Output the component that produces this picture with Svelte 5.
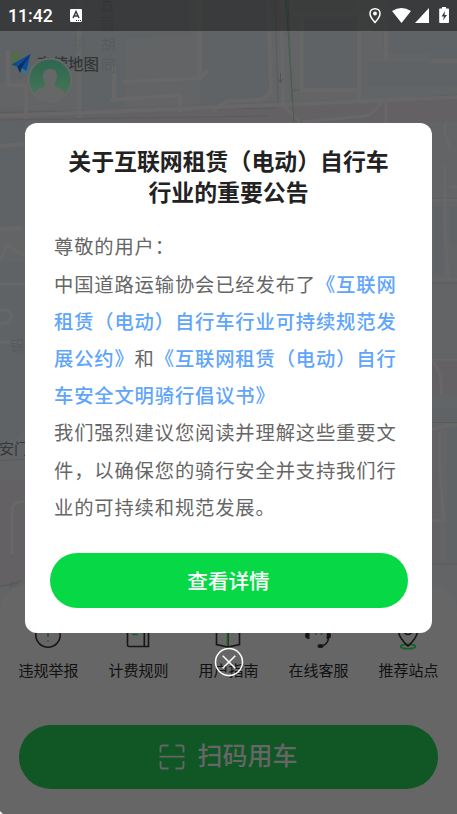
<script>
  const services = [
    { name: '违规举报', icon: 'report' },
    { name: '计费规则', icon: 'rules' },
    { name: '用户指南', icon: 'guide' },
    { name: '在线客服', icon: 'support' },
    { name: '推荐站点', icon: 'station' }
  ]

  let showNotice = $state(true)
</script>

<main class="screen">
  <svg class="map" viewBox="0 0 457 814" aria-hidden="true">
    <rect width="457" height="814" fill="#636465" />
    <g fill="#5f6365">
      <path d="M0 0H78V70L0 82zM82 0H190V35L125 38V112H82zM200 0H271V84Q271 98 255 98L200 104zM304 16H358V88H304zM368 62H457V86H368zM390 0H457V61H430V54H383V28H390z" />
      <path d="M0 108L25 106V230H0zM0 262H25V430L0 448zM433 207H443V275H433zM450 207H457V245H450zM432 408H457V421H432zM447 425H457V562H447z" />
    </g>
    <g fill="#646164">
      <path d="M0 112L280 101 457 98V122H0zM0 480H25V586H0zM432 425H440V562H432zM432 362H457V395H432z" />
    </g>
    <g fill="none" stroke="#5a5b5c" stroke-width="1">
      <path d="M0 112.500L276 108M276 106L457 95M0 120L270 116M293 90H358M275 0L278 103M288 0L292 103M432 198.500H457M432 283H457M432 357.500H457M432 422.500H457M432 564H457M0 461L25 459M0 586H25" />
    </g>
    <g fill="none" stroke="#676767" stroke-width="4">
      <path d="M0 116L275 105 457 97M79 28V118M8 50V85H26V119M110 100L180 95V112M114 100V66M123 82L200 78V0M200 78L208 71M212 111L228 101M268 0L271 88Q270 99 258 100L227 101M281 0L283 103M302 15V90H359V0M292 15H376Q386 15 386 28V60M431 61H457M359 30H371M359 90V100M0 146L25 144M0 229L23 228" />
      <path d="M0 260L7 244 14 250 25 256M0 284H25M0 310H8Q14 315 8 323L0 324M0 342H25M12 554V509Q13 502 25 501M445 165Q443 230 449 280M432 200H457M450 187H457M432 280H457M432 359H457M433 362Q443 373 441 395M432 430Q440 425 457 425M440 433Q438 460 444 520L432 521" stroke-width="3" />
      <path d="M383 100Q375 113 366 116L303 122M284 106L300 122M386 103V123M446 122Q442 132 448 140L449 150" stroke-width="3" />
    </g>
    <path d="M286 0L294 122" stroke="#42614a" fill="none" />
    <path d="M280.500 73V82M278 79L280.500 83 283 79" stroke="#535353" fill="none" />
    <path d="M0 586L19 583M9 584L21 581M13 580L10 589" stroke="#565a60" fill="none" />
    <g class="street">
      <text x="100" y="12">真</text>
      <text x="100" y="29">弱</text>
      <text x="101" y="50">胡</text>
      <text x="101" y="71">同</text>
      <text class="hidden-lane" x="71" y="50">胡</text>
      <text x="10" y="351">锡</text>
    </g>
    <text class="district" x="-1" y="453.500">安门</text>
    <path d="M0 810L4 814H0z" fill="#eee" />
  </svg>

  <header class="status">
    <span class="time">11:42</span>
    <svg class="keyboard" viewBox="0 0 12 13">
      <rect width="12" height="13" rx="1.200" fill="#fff" />
      <path d="M3 9L6 2.500 9 9M4.200 7H7.800" fill="none" stroke="#3b3b3b" stroke-width="1.500" />
      <path d="M6 11.500h1M8 11.500h1M10 11.500h1" stroke="#3b3b3b" />
    </svg>
    <svg class="signals" viewBox="0 0 82 18">
      <path d="M6 1.700C2.900 1.700 1 3.900 1 6.600C1 10.200 6 15.500 6 15.500S11 10.200 11 6.600C11 3.900 9.100 1.700 6 1.700z" fill="none" stroke="#fff" stroke-width="1.500" />
      <circle cx="6" cy="6.500" r="1.900" fill="#fff" />
      <path d="M23 4Q32.500-2 42 4L32.500 16z" fill="#fff" />
      <path d="M60 1V16H46z" fill="#fff" />
      <path d="M73 0h4v1.500h2.200a.8 .8 0 0 1 .8 .8V15.200a.8 .8 0 0 1-.8 .8H71a.8 .8 0 0 1-.8-.8V2.300a.8 .8 0 0 1 .8-.8h2z" fill="#fff" />
      <path d="M76 4L72.500 9.500H75L74 13.500 78 8H75.500z" fill="#3b3b3b" />
    </svg>
  </header>

  <div class="brand">
    <svg class="brand-mark" viewBox="0 0 22 24">
      <path d="M1 3Q4 0 9 1L11 9 1 17z" fill="#526e48" />
      <path d="M13 15L20 13 17 23Q13 24 11 21z" fill="#3e7186" />
      <path d="M20.500 3L1.500 13.500 7.500 16 10 22 11.500 17 16.500 20z" fill="#104c96" />
      <path d="M20.500 3L7.500 16 10 22 11.500 17z" fill="#082e63" />
    </svg>
    <span>高德地图</span>
    <svg class="avatar" viewBox="0 0 46 46">
      <defs>
        <linearGradient id="face" x2="0" y2="1">
          <stop stop-color="#2c6550" />
          <stop offset="1" stop-color="#4b7857" />
        </linearGradient>
        <clipPath id="disc"><circle cx="23" cy="23" r="20.500" /></clipPath>
      </defs>
      <circle cx="23" cy="23" r="22.500" fill="#676968" />
      <g clip-path="url(#disc)">
        <rect width="46" height="46" fill="url(#face)" />
        <path d="M23 12C18.500 12 15.800 15 16 19.500C16.200 23.500 18.200 25.500 18.200 27.500C18.200 31 9.500 31 7 37V46H39V37C36.500 31 27.800 31 27.800 27.500C27.800 25.500 29.800 23.500 30 19.500C30.200 15 27.500 12 23 12z" fill="#666867" />
      </g>
    </svg>
  </div>

  <section class="panel">
    <nav class="services">
      {#each services as service}
        <a href="#{service.icon}" class="service">
          <svg viewBox="0 0 30 30">
            {#if service.icon === 'report'}
              <circle cx="15" cy="15" r="12.200" />
              <path class="accent" d="M15 8V17M15 20V21.500" />
            {:else if service.icon === 'rules'}
              <path d="M4.500 3H25.500V26.500H6Q4.500 26.500 4.500 25zM21.300 3V26.500" />
              <path class="accent" d="M9 14.500H15" />
            {:else if service.icon === 'guide'}
              <path d="M3.500 3L15 6V27L3.500 24.500zM15 6L26.500 3V24.500L15 27" />
              <path class="accent" d="M14.500 7V26" />
            {:else if service.icon === 'support'}
              <path d="M4.500 15V12a10.500 10.500 0 0 1 21 0V18Q25 25 17 26.500" />
              <path class="filled" d="M6.500 11.500Q2 12 2 15.500T6.500 19zM24 11.500Q28 12 28 15.500T23.500 19z" />
              <ellipse class="filled" cx="17.500" cy="26" rx="3" ry="2" />
              <path class="accent" d="M13 10V15M18.500 10V15" />
            {:else}
              <ellipse class="accent" cx="15" cy="26.500" rx="7.500" ry="2.300" />
              <path d="M15 1.500a9.500 9.500 0 0 0-9.500 9.500C5.500 16 11 23 15 26C19 23 24.500 16 24.500 11A9.500 9.500 0 0 0 15 1.500z" />
              <circle cx="15" cy="10.500" r="4" />
            {/if}
          </svg>
          <span>{service.name}</span>
        </a>
      {/each}
    </nav>
    <button class="scan">
      <svg viewBox="0 0 26 26">
        <path d="M1.500 8.500V3.500Q1.500 1.500 3.500 1.500H9.500M16.500 1.500H22.500Q24.500 1.500 24.500 3.500V8.500M24.500 17V22.500Q24.500 24.500 22.500 24.500H16.500M9.500 24.500H3.500Q1.500 24.500 1.500 22.500V17M.5 12.700H25.500" />
      </svg>
      <span>扫码用车</span>
    </button>
  </section>

  {#if showNotice}
    <div class="overlay">
      <section class="dialog">
        <h2>关于互联网租赁（电动）自行车<br />行业的重要公告</h2>
        <div class="content">
          <p>尊敬的用户：</p>
          <p>中国道路运输协会已经发布了<a href="#pact">《互联网<br />租赁（电动）自行车行业可持续规范发<br />展公约》</a>和<a href="#proposal">《互联网租赁（电动）自行<br />车安全文明骑行倡议书》</a></p>
          <p>我们强烈建议您阅读并理解这些重要文<br />件，以确保您的骑行安全并支持我们行<br />业的可持续和规范发展。</p>
        </div>
        <button class="confirm">查看详情</button>
      </section>
      <button class="close" aria-label="关闭" onclick={() => (showNotice = false)}>
        <svg viewBox="0 0 30 30">
          <circle cx="15" cy="15" r="13.500" />
          <path d="M8.700 8.700L21.300 21.300M21.300 8.700L8.700 21.300" />
        </svg>
      </button>
    </div>
  {/if}
</main>

<style>
  :global(body) {
    margin: 0;
    background: #666;
  }

  .screen {
    position: relative;
    display: flex;
    flex-direction: column;
    width: 457px;
    height: 814px;
    overflow: hidden;
    font-family: "Noto Sans CJK SC", sans-serif;
  }

  .map {
    position: absolute;
    top: 0;
    left: 0;
    width: 457px;
    height: 814px;
  }

  .street {
    fill: #565859;
    font-size: 14.500px;
    font-weight: 300;
  }

  .hidden-lane {
    fill: #5d5f60;
  }

  .district {
    fill: #34373d;
    font-size: 15px;
  }

  .status {
    position: relative;
    display: flex;
    align-items: center;
    box-sizing: border-box;
    height: 31px;
    padding: 0 6px 0 8px;
    background: rgba(0, 0, 0, 0.4);
    color: #fff;
  }

  .time {
    width: 62px;
    font: 500 17.700px/31px Roboto, sans-serif;
    padding-top: 1px;
  }

  .keyboard {
    width: 12px;
    height: 13px;
  }

  .signals {
    width: 82px;
    height: 18px;
    margin-left: auto;
  }

  .brand {
    position: relative;
    display: flex;
    height: 26px;
    margin: 20px 0 0 10px;
    color: #353535;
    font-size: 15.500px;
    font-weight: 500;
    line-height: 24px;
  }

  .brand-mark {
    width: 22px;
    height: 24px;
    margin-right: 5px;
  }

  .avatar {
    position: absolute;
    top: 6px;
    left: 17px;
    width: 46px;
    height: 46px;
  }

  .panel {
    position: relative;
    box-sizing: border-box;
    height: 230px;
    margin-top: auto;
    padding: 36px 3px 0;
    border-radius: 28px 28px 0 0;
    background: #666;
    clip-path: polygon(0 0, 100% 0, 100% 100%, 3px 100%, 0 227px);
  }

  .services {
    display: grid;
    grid-template-columns: repeat(5, 90px);
  }

  .service {
    display: flex;
    flex-direction: column;
    align-items: center;
    color: #111;
    font-size: 15px;
    line-height: 22px;
    text-decoration: none;
  }

  .service svg {
    width: 30px;
    height: 30px;
    margin-bottom: 9px;
    fill: none;
    stroke: #171717;
    stroke-width: 1.600;
  }

  .service span {
    padding-left: 1px;
  }

  .service .accent {
    stroke: #175f2b;
  }

  .service .filled {
    fill: #171717;
    stroke: none;
  }

  button {
    display: flex;
    align-items: center;
    justify-content: center;
    padding: 0;
    border: 0;
    font-family: inherit;
    font-weight: 500;
  }

  .scan {
    gap: 12px;
    width: 419px;
    height: 64px;
    margin: 44px 16px 0;
    border-radius: 32px;
    background: #105725;
    color: #666;
    font-size: 25px;
  }

  .scan span {
    padding-bottom: 6px;
  }

  .scan svg {
    width: 26px;
    height: 26px;
    fill: none;
    stroke: #666;
    stroke-width: 1.800;
  }

  .overlay {
    position: absolute;
    inset: 0;
    display: flex;
    flex-direction: column;
    align-items: center;
    padding-top: 123px;
  }

  .dialog {
    box-sizing: border-box;
    width: 407px;
    height: 510px;
    padding: 22px 24px 25px;
    border-radius: 12px;
    background: #fff;
  }

  h2 {
    margin: 0;
    color: #222;
    font-size: 22.900px;
    font-weight: 700;
    line-height: 31px;
    text-align: center;
    white-space: nowrap;
  }

  .content {
    margin: 21.400px 0 26.600px 5px;
    color: #666;
    font-size: 19.300px;
    line-height: 37.200px;
    letter-spacing: 0.870px;
    white-space: nowrap;
  }

  .content p {
    margin: 0;
  }

  .content a {
    color: #60a5fa;
    text-decoration: none;
    font-weight: 500;
  }

  .confirm {
    width: 358px;
    height: 55px;
    margin-left: 0.500px;
    border-radius: 28px;
    background: #07d846;
    color: #fff;
    font-size: 20.600px;
  }

  .close {
    width: 30px;
    height: 30px;
    margin-top: 14px;
    background: none;
  }

  .close svg {
    width: 30px;
    height: 30px;
    fill: none;
    stroke: #fff;
    stroke-width: 1.500;
  }
</style>
